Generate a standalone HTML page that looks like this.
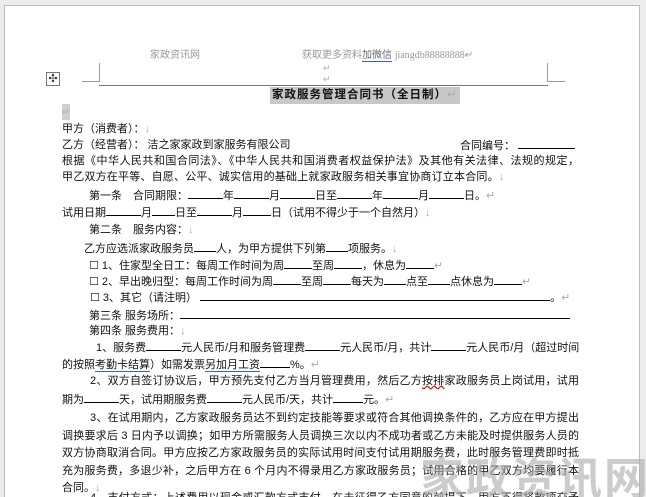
<!DOCTYPE html>
<html style="overflow:hidden;height:497px"><head><meta charset="utf-8"><style>
*{margin:0;padding:0}
body{width:646px;height:497px;background:#ececec;position:relative;overflow:hidden;font-family:"Liberation Sans","Noto Sans CJK SC",sans-serif;font-size:11px;color:#111}
#page{position:absolute;left:4px;top:5px;width:634px;height:492px;background:#fff;border-left:1px solid #bdbdbd;border-top:1px solid #bdbdbd;border-right:1px solid #bdbdbd}
.l{position:absolute;white-space:nowrap;line-height:14px;height:14px}
.j{text-align:justify;text-align-last:justify;width:517px}
.u{display:inline-block;border-bottom:1px solid #000;height:10px;vertical-align:baseline}
.g{color:#999}
.m{color:#aaa}
.wave{text-decoration:underline wavy #d00}
.bl{border-bottom:1px solid #36c}
</style></head><body>
<div id="page"></div>
<div class="l g" style="left:150px;top:49px;font-size:10px">家政资讯网</div>
<div class="l g" style="left:302px;top:49px;font-size:10px">获取更多资料<span style="border-bottom:1px solid #36c;color:#666">加微信</span> <span style="font-family:'Liberation Serif',serif">jiangdb88888888</span>↵</div>
<div style="position:absolute;left:99px;top:63px;width:1px;height:18px;background:#999"></div>
<div style="position:absolute;left:82px;top:81px;width:18px;height:1px;background:#999"></div>
<div style="position:absolute;left:547px;top:63px;width:1px;height:18px;background:#999"></div>
<div style="position:absolute;left:547px;top:81px;width:18px;height:1px;background:#999"></div>
<div style="position:absolute;left:99px;top:85px;width:449px;height:1px;background:#777"></div>
<div class="l m" style="left:323px;top:61px;font-size:9px">↵</div>
<div class="l m" style="left:323px;top:72px;font-size:9px">↵</div>
<div style="position:absolute;left:46px;top:72px;width:12px;height:12px;border:1px solid #777;font-size:11px;line-height:12px;text-align:center;color:#333">✣</div>
<div class="l" style="left:270px;top:87px;height:17px;line-height:17px;background:#c8c8c8;font-weight:bold;font-size:11.5px;padding:0 2px;letter-spacing:1px">家政服务管理合同书（全日制）<span class="m" style="font-weight:normal">↵</span></div>
<div class="l m" style="left:62px;top:104px;width:8px;height:16px;background:#cfcfcf;font-size:9px;line-height:16px">↵</div>
<div class="l" style="left:62px;top:122px">甲方（消费者）：<span class="m">↓</span></div>
<div class="l" style="left:62px;top:138px">乙方（经营者）： 洁之家家政到家服务有限公司</div>
<div class="l" style="left:460px;top:138px">合同编号： <span class="u" style="width:57px"></span></div>
<div class="l j" style="left:62px;top:154px">根据《中华人民共和国合同法》、《中华人民共和国消费者权益保护法》及其他有关法律、法规的规定，</div>
<div class="l" style="left:62px;top:170px;letter-spacing:0.2px">甲乙双方在平等、自愿、公平、诚实信用的基础上就家政服务相关事宜协商订立本合同。<span class="m">↓</span></div>
<div class="l" style="left:89px;top:188px">第一条　合同期限：<span class="u" style="width:35px"></span>年<span class="u" style="width:35px"></span>月<span class="u" style="width:35px"></span>日至<span class="u" style="width:35px"></span>年<span class="u" style="width:35px"></span>月<span class="u" style="width:35px"></span>日。<span class="m">↵</span></div>
<div class="l" style="left:62px;top:205px">试用日期<span class="u" style="width:35px"></span>月<span class="u" style="width:23px"></span>日至<span class="u" style="width:35px"></span>月<span class="u" style="width:28px"></span>日（试用不得少于一个自然月）<span class="m">↓</span></div>
<div class="l" style="left:89px;top:223px">第二条　服务内容：<span class="m">↓</span></div>
<div class="l" style="left:84px;top:241px">乙方应选派家政服务员<span class="u" style="width:22px"></span>人，为甲方提供下列第<span class="u" style="width:22px"></span>项服务。<span class="m">↓</span></div>
<div class="l" style="left:89px;top:258px">☐ 1、住家型全日工：每周工作时间为周<span class="u" style="width:28px"></span>至周<span class="u" style="width:28px"></span>，休息为<span class="u" style="width:28px"></span><span class="m">↵</span></div>
<div class="l" style="left:89px;top:274px">☐ 2、早出晚归型：每周工作时间为周<span class="u" style="width:28px"></span>至周<span class="u" style="width:28px"></span>每天为<span class="u" style="width:22px"></span>点至<span class="u" style="width:22px"></span>点休息为<span class="u" style="width:28px"></span><span class="m">↵</span></div>
<div class="l" style="left:90px;top:290px">☐ 3、其它（请注明） <span class="u" style="width:350px"></span>。<span class="m">↵</span></div>
<div class="l" style="left:89px;top:308px">第三条 服务场所：<span class="u" style="width:390px"></span></div>
<div class="l" style="left:89px;top:324px">第四条 服务费用：<span class="m">↓</span></div>
<div class="l" style="left:96px;top:340px;width:483px;text-align:justify;text-align-last:justify">1、服务费<span class="u" style="width:35px"></span>元人民币/月和服务管理费<span class="u" style="width:35px"></span>元人民币/月，共计<span class="u" style="width:35px"></span>元人民币/月（超过时间</div>
<div class="l" style="left:62px;top:357px">的按照<span class="bl">考勤卡结算</span>）如需发票<span class="bl">另加月工资</span><span class="u" style="width:30px"></span>%。<span class="m">↵</span></div>
<div class="l" style="left:90px;top:374px;width:489px;text-align:justify;text-align-last:justify">2、双方自签订协议后，甲方预先支付乙方当月管理费用，然后乙方<span class="wave">按排</span>家政服务员上岗试用，试用</div>
<div class="l" style="left:62px;top:392px">期为<span class="u" style="width:35px"></span>天，试用期服务费<span class="u" style="width:35px"></span>元人民币/天，共计<span class="u" style="width:30px"></span>元。<span class="m">↵</span></div>
<div class="l" style="left:90px;top:411px;width:489px;text-align:justify;text-align-last:justify">3、在试用期内，乙方家政服务员达不到约定技能等要求或符合其他调换条件的，乙方应在甲方提出</div>
<div class="l j" style="left:62px;top:429px">调换要求后 3 日内予以调换；如甲方所需服务人员调换三次以内不成功者或乙方未能及时提供服务人员的</div>
<div class="l j" style="left:62px;top:446px">双方协商取消合同。甲方应按乙方家政服务员的实际试用时间支付试用期服务费，此时服务管理费即时抵</div>
<div class="l j" style="left:62px;top:464px">充为服务费，多退少补，之后甲方在 6 个月内不得录用乙方家政服务员；试用合格的甲乙双方均要履行本</div>
<div class="l" style="left:62px;top:481px">合同。<span class="m">↓</span></div>
<div class="l j" style="left:90px;top:491px;width:489px">4、支付方式：上述费用以现金或汇款方式支付，在未征得乙方同意的前提下，甲方不得将款项交予</div>
<div style="position:absolute;left:420px;top:455px;font-size:44px;line-height:50px;color:rgba(170,170,170,0.6);font-weight:bold;letter-spacing:2px;white-space:nowrap">家政资讯网</div>
</body></html>
